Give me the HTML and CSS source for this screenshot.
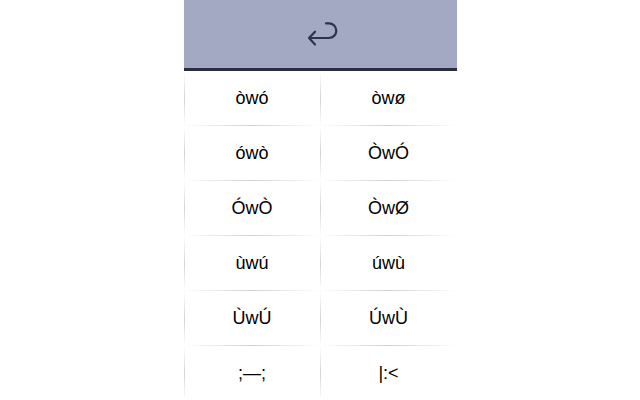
FILE: index.html
```html
<!DOCTYPE html>
<html>
<head>
<meta charset="utf-8">
<link rel="stylesheet" href="styles.css">
</head>
<body>
<div class="panel">
  <div class="header">
    <svg class="back" width="40" height="30" viewBox="0 0 40 30">
      <path d="M14 11.7 L8 18 L14 24.5 M8 18 H28 A7.3 7.3 0 0 0 28 3.4 H25" fill="none" stroke="#2b3448" stroke-width="2.2" stroke-linecap="round" stroke-linejoin="round"/>
    </svg>
  </div>
  <div class="grid">
    <div class="cell">òwó</div><div class="cell">òwø</div>
    <div class="cell">ówò</div><div class="cell">ÒwÓ</div>
    <div class="cell">ÓwÒ</div><div class="cell">ÒwØ</div>
    <div class="cell">ùwú</div><div class="cell">úwù</div>
    <div class="cell">ÙwÚ</div><div class="cell">ÚwÙ</div>
    <div class="cell">;—;</div><div class="cell">|:&lt;</div>
  </div>
</div>
</body>
</html>
```
FILE: styles.css
```css
html, body {
  margin: 0;
  padding: 0;
  background: #ffffff;
}
body {
  width: 640px;
  height: 400px;
  overflow: hidden;
  font-family: "Liberation Sans", Arial, sans-serif;
}
.panel {
  width: 273px;
  margin-left: 184px;
}
.header {
  height: 68px;
  background: #a3a8c3;
  border-bottom: 3px solid #2a2d44;
  display: flex;
  align-items: center;
  justify-content: center;
}
.back {
  display: block;
  margin-top: 1px;
}
.grid {
  display: grid;
  grid-template-columns: 136px 137px;
  grid-auto-rows: 55px;
}
.cell {
  display: flex;
  align-items: center;
  justify-content: center;
  font-size: 18px;
  color: #000;
  background:
    linear-gradient(to right, rgba(255,255,255,0), #d0d0d0 50%, rgba(255,255,255,0)) left bottom / 100% 1px no-repeat,
    linear-gradient(to bottom, rgba(255,255,255,0), #d4d4d4 50%, rgba(255,255,255,0)) left top / 1px 100% no-repeat,
    #ffffff;
}
```
